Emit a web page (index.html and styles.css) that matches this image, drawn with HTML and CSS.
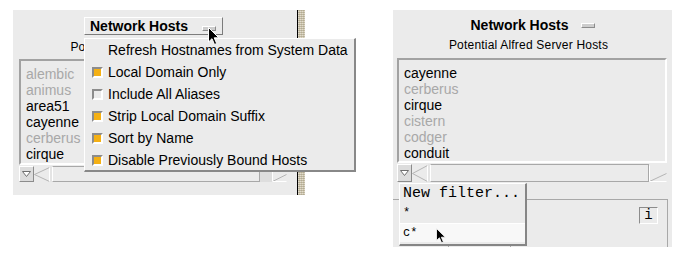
FILE: index.html
```html
<!DOCTYPE html>
<html lang="en">
<head>
  <meta charset="UTF-8" />
  <title>Network Hosts</title>
  <link rel="stylesheet" href="styles.css">
</head>
<body>
  <div class="screen">

    <!-- left shot: options menu open -->
    <div class="shot shot-left">
      <div class="panel panel-left">
        <div class="title-btn">
          <span>Network Hosts</span>
          <span class="knob"></span>
        </div>
        <div class="subtitle">Potential Alfred Server Hosts</div>
        <div class="list list-left">
          <div class="muted">alembic</div>
          <div class="muted">animus</div>
          <div>area51</div>
          <div>cayenne</div>
          <div class="muted">cerberus</div>
          <div>cirque</div>
        </div>
        <div class="hscroll hscroll-left">
          <div class="drop"><svg width="9" height="6" viewBox="0 0 9 6"><polygon points="0.5,0.5 8.5,0.5 4.5,5.5" fill="#fff" stroke="#6e6e6e"/></svg></div>
          <div class="arrow"><svg width="16" height="15" viewBox="0 0 16 15"><polyline points="15.5,0.5 0.5,7.5 15.5,14.5" fill="none" stroke="#b4b4b4"/><line x1="15.5" y1="0.5" x2="15.5" y2="14.5" stroke="#fff"/></svg></div>
          <div class="thumb"></div>
          <div class="trough"></div>
          <div class="arrow arrow-r"><svg width="15" height="15" viewBox="0 0 15 15"><polyline points="0.5,14.5 14.5,7.5" fill="none" stroke="#b4b4b4"/><polyline points="0.5,0.5 0.5,14.5 14.5,14.5" fill="none" stroke="#fff"/></svg></div>
        </div>
      </div>
      <div class="sash"></div>

      <div class="menu">
        <div class="menu-item"><span class="spacer"></span>Refresh Hostnames from System Data</div>
        <div class="menu-item"><span class="check on"></span>Local Domain Only</div>
        <div class="menu-item"><span class="check"></span>Include All Aliases</div>
        <div class="menu-item"><span class="check on"></span>Strip Local Domain Suffix</div>
        <div class="menu-item"><span class="check on"></span>Sort by Name</div>
        <div class="menu-item"><span class="check on"></span>Disable Previously Bound Hosts</div>
      </div>
      <svg class="cursor cursor-left" width="12" height="19" viewBox="0 0 12 19"><path d="M0.5,0.5 L0.5,15 L4,11.7 L6.5,17.5 L8.7,16.5 L6.2,10.8 L10.8,10.8 Z" fill="#000" stroke="#fff" stroke-width="1"/></svg>
    </div>

    <!-- right shot: filter popup open -->
    <div class="shot shot-right">
      <div class="panel panel-right">
        <div class="title-plain">
          <span>Network Hosts</span>
          <span class="knob"></span>
        </div>
        <div class="subtitle subtitle-right">Potential Alfred Server Hosts</div>
        <div class="list list-right">
          <div>cayenne</div>
          <div class="muted">cerberus</div>
          <div>cirque</div>
          <div class="muted">cistern</div>
          <div class="muted">codger</div>
          <div>conduit</div>
        </div>
        <div class="hscroll hscroll-right">
          <div class="drop"><svg width="9" height="6" viewBox="0 0 9 6"><polygon points="0.5,0.5 8.5,0.5 4.5,5.5" fill="#fff" stroke="#6e6e6e"/></svg></div>
          <div class="arrow"><svg width="16" height="17" viewBox="0 0 16 17"><polyline points="15.5,0.5 0.5,8.5 15.5,16.5" fill="none" stroke="#b4b4b4"/><line x1="15.5" y1="0.5" x2="15.5" y2="16.5" stroke="#fff"/></svg></div>
          <div class="thumb"></div>
          <div class="arrow arrow-r2"><svg width="18" height="17" viewBox="0 0 18 17"><polyline points="0.5,16.5 17.5,8.5" fill="none" stroke="#b4b4b4"/><polyline points="0.5,0.5 0.5,16.5 17.5,16.5" fill="none" stroke="#fff"/></svg></div>
        </div>
        <div class="frame">
          <div class="info-row"><span class="info-btn">i</span></div>
          <div class="cols"><span class="col c1"></span><span class="col c2"></span><span class="col"></span></div>
        </div>
      </div>

      <div class="popup">
        <div class="pop-item big">New filter...</div>
        <div class="pop-item">*</div>
        <div class="pop-item hot">c*</div>
      </div>
      <svg class="cursor cursor-right" width="11" height="16" viewBox="0 0 11 16"><path d="M0.5,0.5 L0.5,12.5 L3.4,9.8 L5.6,14.8 L7.4,14 L5.3,9.2 L9.3,9.2 Z" fill="#000" stroke="#fff" stroke-width="0.8"/></svg>
    </div>

  </div>
</body>
</html>
```

FILE: styles.css
```css
body {
  margin: 0;
  background: #fff;
  color: #000;
  font-family: "Liberation Sans", Arial, sans-serif;
  font-size: 14px;
}

.screen {
  display: flex;
  align-items: flex-start;
  gap: 88px;
  padding: 10px 0 0 13px;
}

.shot {
  position: relative;
  display: flex;
}

.panel {
  background: #ebebeb;
  box-sizing: border-box;
}

.panel-left {
  width: 284px;
  height: 185px;
  padding-top: 7px;
}

.panel-right {
  width: 279px;
  height: 237px;
  padding-top: 6px;
}

.sash {
  width: 8px;
  height: 185px;
  box-sizing: border-box;
  border-left: 1px solid #000;
  background-color: #d2cab2;
  background-image:
    repeating-linear-gradient(0deg, rgba(90, 80, 50, 0.25) 0 1px, transparent 1px 2px),
    repeating-linear-gradient(90deg, rgba(255, 255, 255, 0.35) 0 1px, transparent 1px 2px);
}

/* titles */
.title-btn {
  display: flex;
  align-items: center;
  width: 139px;
  height: 18px;
  margin-left: 71px;
  padding-left: 5px;
  box-sizing: border-box;
  border: 1px solid;
  border-color: #fff #7c7c7c #7c7c7c #fff;
  font-weight: bold;
}

.title-btn .knob {
  align-self: flex-end;
  margin: 0 6px 3px auto;
}

.title-plain {
  display: flex;
  justify-content: center;
  align-items: center;
  gap: 12px;
  height: 18px;
  font-weight: bold;
}

.knob {
  width: 14px;
  height: 5px;
  box-sizing: border-box;
  background: #cdcdcd;
  border-top: 1px solid #fff;
  border-left: 1px solid #fff;
  border-bottom: 1px solid #8c8c8c;
  border-right: 1px solid #8c8c8c;
}

.subtitle {
  height: 24px;
  line-height: 24px;
  font-size: 12px;
  letter-spacing: 0.2px;
  text-align: center;
  padding-right: 10px;
}

.subtitle-right {
  height: 23px;
  line-height: 22px;
  margin-bottom: 1px;
  padding-right: 8px;
}

/* host lists */
.list {
  box-sizing: border-box;
  border: 2px solid;
  border-color: #a2a2a2 #fff #fff #a2a2a2;
  padding: 5px 0 0 5px;
  line-height: 16px;
  overflow: hidden;
}

.list-left {
  height: 106px;
  margin: 0 10px 0 6px;
}

.list-right {
  height: 105px;
  margin: 0 5px 0 4px;
}

.muted {
  color: #a8a8a8;
}

/* horizontal scroll row */
.hscroll {
  display: flex;
  height: 16px;
  margin: 1px 10px 0 6px;
  background: #e4e4e4;
}

.hscroll-right {
  height: 18px;
  margin: 1px 5px 0 4px;
}

.drop {
  width: 15px;
  box-sizing: border-box;
  display: flex;
  align-items: center;
  justify-content: center;
  background: #dcdcdc;
  border: 1px solid;
  border-color: #fff #8c8c8c #8c8c8c #fff;
}

.arrow {
  display: flex;
  align-items: center;
  background: #ebebeb;
}

.thumb {
  flex: 1;
  box-sizing: border-box;
  margin-left: 2px;
  background: #ebebeb;
  border: 1px solid;
  border-color: #a8a8a8 #a8a8a8 #a8a8a8 #fff;
}

.trough {
  width: 12px;
  background: #dedede;
}

/* options menu */
.menu {
  position: absolute;
  left: 71px;
  top: 28px;
  width: 272px;
  height: 134px;
  box-sizing: border-box;
  background: #ebebeb;
  border-top: 1px solid #fff;
  border-left: 1px solid #fff;
  border-right: 2px solid #888;
  border-bottom: 2px solid #888;
}

.menu-item {
  display: flex;
  align-items: center;
  gap: 5px;
  height: 22px;
  padding-left: 7px;
}

.spacer {
  width: 11px;
}

.check {
  width: 11px;
  height: 11px;
  box-sizing: border-box;
  border: 2px solid;
  border-color: #8c8c8c #fff #fff #8c8c8c;
  background: #ebebeb;
}

.check.on {
  background: #f4b014;
}

/* frame below the right list */
.frame {
  margin-top: 17px;
  width: 275px;
  height: 48px;
  box-sizing: border-box;
  border-top: 1px solid #a8a8a8;
  border-right: 1px solid #a8a8a8;
  display: flex;
  flex-direction: column;
}

.info-row {
  display: flex;
  justify-content: flex-end;
  padding: 7px 9px 0 0;
  flex: 1;
}

.info-btn {
  width: 19px;
  height: 17px;
  box-sizing: border-box;
  border: 1px solid;
  border-color: #8c8c8c #fff #fff #8c8c8c;
  font-family: "Liberation Mono", monospace;
  font-size: 14px;
  line-height: 15px;
  text-align: center;
}

.cols {
  display: flex;
  height: 7px;
}

.col {
  flex: 1;
}

.c1 {
  flex: 0 0 55px;
  border-right: 1px solid #a8a8a8;
}

.c2 {
  flex: 0 0 61px;
  border-right: 1px solid #a8a8a8;
}

/* filter popup */
.popup {
  position: absolute;
  left: 6px;
  top: 173px;
  width: 128px;
  height: 63px;
  box-sizing: border-box;
  background: #ebebeb;
  border-top: 1px solid #fff;
  border-left: 1px solid #fff;
  border-right: 2px solid #868686;
  border-bottom: 2px solid #868686;
  font-family: "Liberation Mono", monospace;
}

.pop-item {
  height: 19px;
  line-height: 19px;
  padding-left: 3px;
  font-size: 12px;
}

.pop-item.big {
  height: 20px;
  line-height: 20px;
  font-size: 15px;
}

.pop-item.hot {
  background: #f8f8f8;
  border-top: 1px solid #fff;
  height: 18px;
  line-height: 18px;
}

.cursor {
  position: absolute;
}

.cursor-left {
  left: 195px;
  top: 17px;
}

.cursor-right {
  left: 43px;
  top: 218px;
}
```
